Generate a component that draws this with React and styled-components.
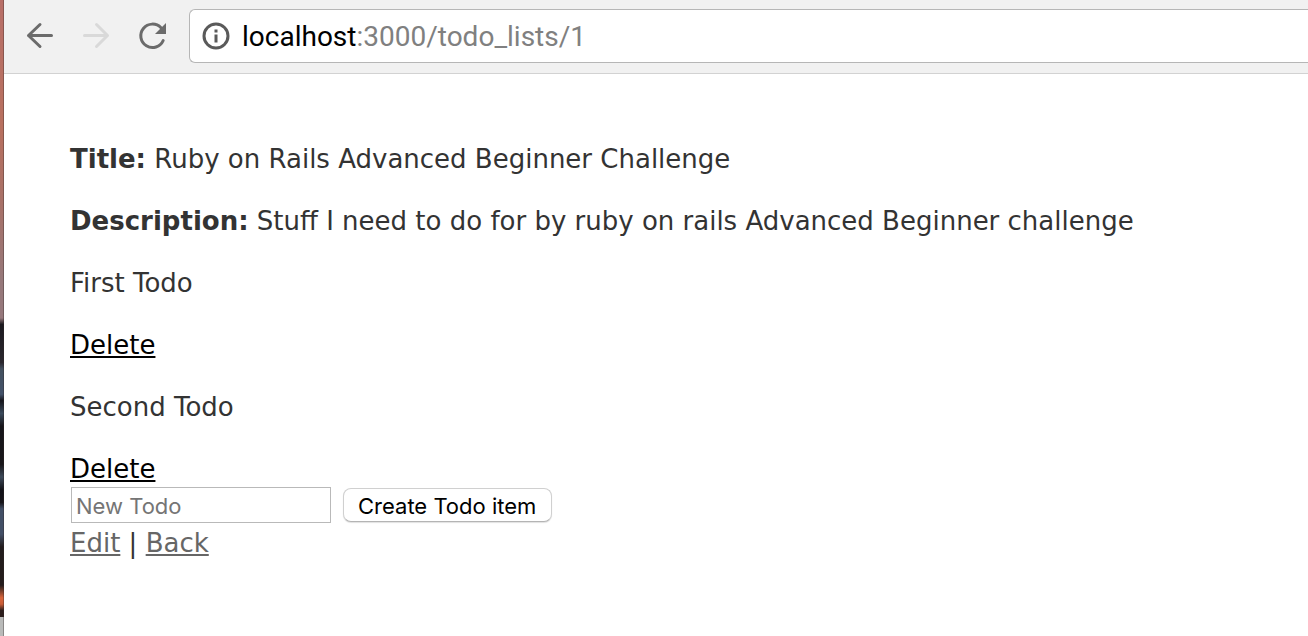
import React, { useState } from "react";
import styled, { createGlobalStyle, ThemeProvider } from "styled-components";

const theme = {
  toolbar: "#f1f1f1",
  toolbarBorder: "#d2d2d2",
  icon: "#6b6b6b",
  iconDisabled: "#d9d9d9",
  text: "#333333",
  link: "#000000",
  visited: "#666666",
  white: "#ffffff",
};

const GlobalStyle = createGlobalStyle`
  * {
    box-sizing: border-box;
  }
  body {
    margin: 0;
    background-color: ${theme.white};
  }
`;

const Desktop = styled.div`
  display: flex;
  min-height: 100vh;
`;

// Strip of the desktop wallpaper that shows beside the window
const Wallpaper = styled.div`
  flex: none;
  width: 4px;
  border-right: 1px solid rgb(50, 40, 40, 0.35);
  background: linear-gradient(
    to bottom,
    #b86f68 0%,
    #b8705f 20%,
    #a87168 32%,
    #96787a 44%,
    #96787c 50%,
    #1c1a20 51%,
    #2a272e 57%,
    #43505f 58%,
    #43526a 62%,
    #15151c 63%,
    #3a4a5c 65%,
    #16151a 67%,
    #18161a 73%,
    #3d4a5a 75%,
    #121218 77%,
    #16151a 79%,
    #424f66 80%,
    #424f66 84%,
    #221c1d 86%,
    #241c1c 92%,
    #d9653c 94%,
    #c95c36 95%,
    #2b1d1b 96%,
    #2b1d1b 97%,
    #b9bab9 97%,
    #b9bab9 100%
  );
`;

const Window = styled.div`
  flex: 1;
  min-width: 0;
  background-color: ${(props) => props.theme.white};
`;

const Toolbar = styled.header`
  display: flex;
  align-items: center;
  gap: 24px;
  height: 74px;
  padding: 0 0 1px 20px;
  background-color: ${(props) => props.theme.toolbar};
  border-bottom: 1px solid ${(props) => props.theme.toolbarBorder};
`;

const NavButton = styled.button`
  display: flex;
  flex: none;
  padding: 0;
  border: none;
  background: none;
  color: ${(props) =>
    props.disabled ? props.theme.iconDisabled : props.theme.icon};
`;

const AddressBar = styled.div`
  display: flex;
  align-items: center;
  flex: 1;
  height: 54px;
  margin-left: -3px;
  padding-left: 10px;
  background-color: ${(props) => props.theme.white};
  border: 1px solid #b6b6b6;
  border-right: none;
  border-radius: 6px 0 0 6px;
`;

const Address = styled.span`
  padding-top: 2px;
  margin-left: 10px;
  font-family: Roboto, "Liberation Sans", sans-serif;
  font-size: 28px;
  line-height: 36px;
  color: #808080;
`;

const Host = styled.span`
  color: #000000;
`;

const Page = styled.main`
  padding: 67px 66px;
  font-family: Verdana, "DejaVu Sans", sans-serif;
  font-size: 26px;
  line-height: 36px;
  color: ${(props) => props.theme.text};
`;

const Paragraph = styled.p`
  margin: 0 0 26px;
`;

const TodoItem = styled.div`
  margin-bottom: ${(props) => (props.$last ? "0" : "26px")};
`;

const PageLink = styled.a`
  color: ${(props) =>
    props.$visited ? props.theme.visited : props.theme.link};
  text-decoration-thickness: 2px;
  text-underline-offset: 2px;
`;

const TodoForm = styled.form`
  display: flex;
  align-items: center;
  gap: 12px;
  padding: 0 1px 2px;
`;

const TodoInput = styled.input`
  width: 260px;
  height: 36px;
  padding: 3px 4px 1px;
  border: 1px solid #b9b9b9;
  font-family: Inter, "Liberation Sans", sans-serif;
  font-size: 22px;
  &::placeholder {
    color: #757575;
    opacity: 1;
  }
`;

const SubmitButton = styled.button`
  height: 34px;
  padding: 1px 15px 0 14px;
  border: 1px solid #d0d0d0;
  border-bottom-color: #b4b4b4;
  border-radius: 8px;
  box-shadow: 0 1px 1px rgb(0, 0, 0, 0.12);
  background-color: ${(props) => props.theme.white};
  color: #000000;
  font-family: Inter, "Liberation Sans", sans-serif;
  font-size: 22px;
  line-height: 30px;
`;

const BackIcon = () => (
  <svg width="32" height="32" viewBox="0 0 32 32" fill="none">
    <path
      d="M27.5 15.5H4.5M16 4.5L4.5 15.5L16 26.5"
      stroke="currentColor"
      strokeWidth="3"
      strokeLinecap="round"
      strokeLinejoin="round"
    />
  </svg>
);

const ForwardIcon = () => (
  <svg width="32" height="32" viewBox="0 0 32 32" fill="none">
    <path
      d="M4.5 15.5H27.5M16.5 4.5L27.5 15.5L16.5 26.5"
      stroke="currentColor"
      strokeWidth="3"
      strokeLinecap="round"
      strokeLinejoin="round"
    />
  </svg>
);

const ReloadIcon = () => (
  <svg width="32" height="32" viewBox="0 0 32 32" fill="none">
    <path
      d="M27.2 20.5A11.7 11.7 0 1 1 25 7.8"
      stroke="currentColor"
      strokeWidth="3"
      strokeLinecap="round"
    />
    <path d="M30 3V14H19Z" fill="currentColor" />
  </svg>
);

const InfoIcon = () => (
  <svg width="32" height="32" viewBox="0 0 32 32" fill="none">
    <circle cx="16" cy="16" r="12" stroke="#5a5a5a" strokeWidth="3" />
    <path d="M14.5 9.5h3v3h-3zM14.5 14.5h3v8h-3z" fill="#5a5a5a" />
  </svg>
);

const todos = [
  { id: 1, content: "First Todo" },
  { id: 2, content: "Second Todo" },
];

function App() {
  const [content, setContent] = useState("");

  return (
    <ThemeProvider theme={theme}>
      <GlobalStyle />
      <Desktop>
        <Wallpaper />
        <Window>
          <Toolbar>
            <NavButton type="button" aria-label="Back">
              <BackIcon />
            </NavButton>
            <NavButton type="button" aria-label="Forward" disabled>
              <ForwardIcon />
            </NavButton>
            <NavButton type="button" aria-label="Reload">
              <ReloadIcon />
            </NavButton>
            <AddressBar>
              <InfoIcon />
              <Address>
                <Host>localhost</Host>:3000/todo_lists/1
              </Address>
            </AddressBar>
          </Toolbar>
          <Page>
            <Paragraph>
              <strong>Title:</strong> Ruby on Rails Advanced Beginner Challenge
            </Paragraph>
            <Paragraph>
              <strong>Description:</strong> Stuff I need to do for by ruby on
              rails Advanced Beginner challenge
            </Paragraph>
            {todos.map((todo, index) => (
              <TodoItem key={todo.id} $last={index === todos.length - 1}>
                <Paragraph>{todo.content}</Paragraph>
                <PageLink href="#delete">Delete</PageLink>
              </TodoItem>
            ))}
            <TodoForm onSubmit={(event) => event.preventDefault()}>
              <TodoInput
                type="text"
                aria-label="New Todo"
                placeholder="New Todo"
                value={content}
                onChange={(event) => setContent(event.target.value)}
              />
              <SubmitButton type="submit">Create Todo item</SubmitButton>
            </TodoForm>
            <PageLink href="#edit" $visited>
              Edit
            </PageLink>
            {" | "}
            <PageLink href="#back" $visited>
              Back
            </PageLink>
          </Page>
        </Window>
      </Desktop>
    </ThemeProvider>
  );
}

export default App;
